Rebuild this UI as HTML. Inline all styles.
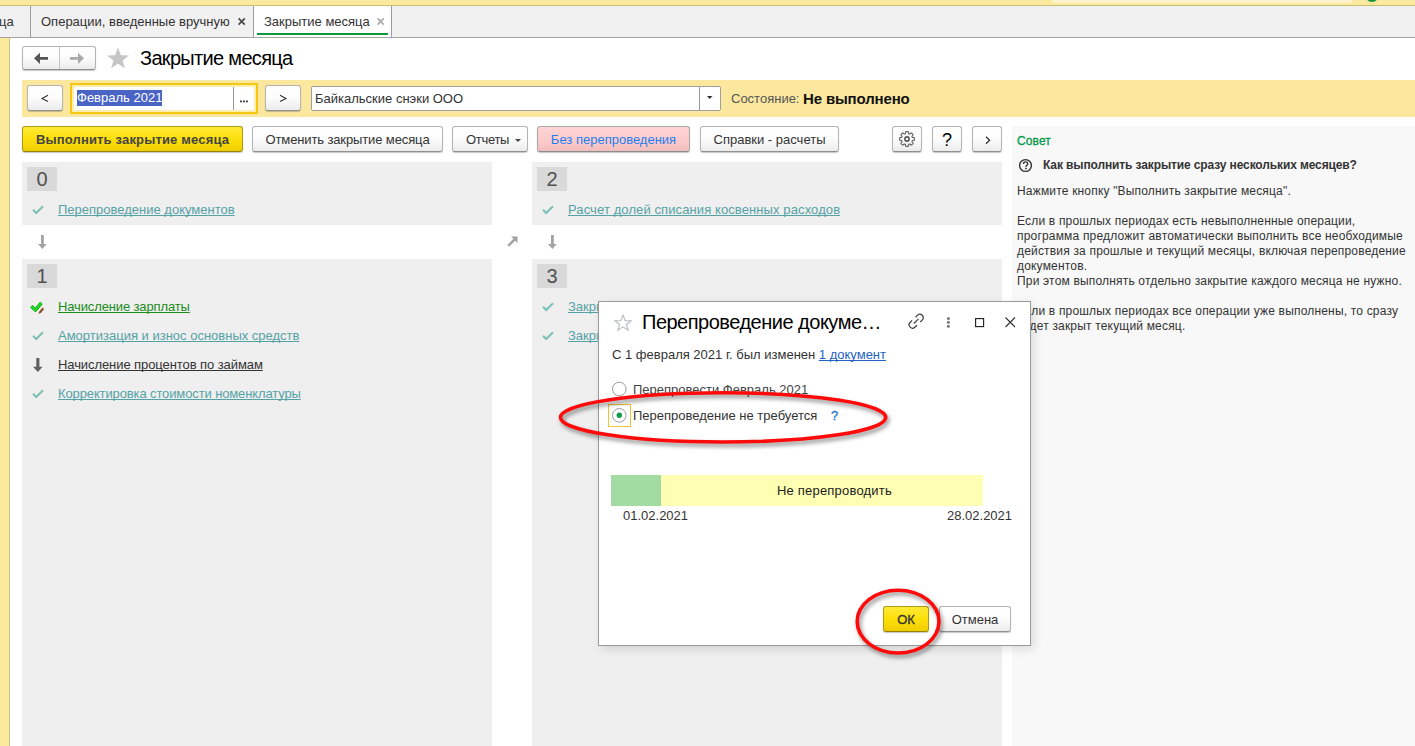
<!DOCTYPE html>
<html><head><meta charset="utf-8">
<style>
*{box-sizing:border-box;margin:0;padding:0}
html,body{width:1415px;height:746px;overflow:hidden;background:#fff;font-family:"Liberation Sans",sans-serif;font-size:13px;color:#333}
.a{position:absolute}
.t{position:absolute;white-space:nowrap;line-height:15px}
svg{position:absolute;overflow:visible}
.btn{position:absolute;border:1px solid #b4b4b4;border-bottom-color:#8f8f8f;border-radius:3px;background:linear-gradient(#ffffff 0%,#fcfcfc 50%,#ebebeb 100%);box-shadow:0 1px 1px rgba(0,0,0,.22);text-align:center;white-space:nowrap;color:#333;line-height:24px;padding-top:1px}
.ybtn{border-color:#ab9a14;border-bottom-color:#948300;background:linear-gradient(#ffe935 0%,#fde00a 50%,#f1cd00 100%);font-weight:bold;color:#444}
.panel{position:absolute;background:#efefef}
.num{position:absolute;background:#d9d9d9;width:30px;height:24px;font-size:20px;color:#505050;text-align:center;line-height:24px}
.lnk{position:absolute;white-space:nowrap;text-decoration:underline;text-decoration-skip-ink:none;color:#55a2a6;line-height:15px;text-underline-offset:1px}
</style></head><body>
<!-- top yellow -->
<div class="a" style="left:0;top:0;width:1415px;height:5px;background:#fbe9a0"></div>
<div class="a" style="left:0;top:5px;width:1415px;height:1px;background:#c9bf70"></div>
<div class="a" style="left:1052px;top:0;width:300px;height:3px;background:#fdf3cc;border-radius:0 0 3px 3px"></div>
<div class="a" style="left:1365px;top:-12px;width:14px;height:14px;border-radius:50%;background:#149640"></div>
<!-- tab bar -->
<div class="a" style="left:0;top:6px;width:1415px;height:32px;background:#f1f1f1;border-bottom:1px solid #a4a4a4"></div>
<div class="t" style="left:-1px;top:14px;color:#333">ца</div>
<div class="a" style="left:30px;top:6px;width:1px;height:31px;background:#9c9c9c"></div>
<div class="t" style="left:41px;top:14px;color:#333">Операции, введенные вручную</div>
<svg style="left:238px;top:18px" width="8" height="8"><path d="M0.6 0.4L6.8 6.6M6.8 0.4L0.6 6.6" stroke="#444" stroke-width="1.6"/></svg>
<div class="a" style="left:253px;top:6px;width:139px;height:31px;background:#fff;border-left:1px solid #9c9c9c;border-right:1px solid #9c9c9c"></div>
<div class="t" style="left:264px;top:14px;color:#333">Закрытие месяца</div>
<svg style="left:377px;top:18px" width="8" height="8"><path d="M0.6 0.4L6.8 6.6M6.8 0.4L0.6 6.6" stroke="#a8a8a8" stroke-width="1.6"/></svg>
<div class="a" style="left:257px;top:33px;width:131px;height:2px;background:#14963c"></div>
<!-- left yellow strip -->
<div class="a" style="left:0;top:38px;width:10px;height:708px;background:#fbea9a;border-right:1px solid #c9c37c"></div>

<!-- nav buttons -->
<div class="btn" style="left:22px;top:46px;width:74px;height:24px"></div>
<div class="a" style="left:59px;top:47px;width:1px;height:22px;background:#c4c4c4"></div>
<svg style="left:34px;top:52px" width="15" height="13"><path d="M0 6.3L6 0.8V5H14V7.8H6V12L0 6.3Z" fill="#555"/></svg>
<svg style="left:70px;top:52px" width="15" height="13"><path d="M14 6.3L8 0.8V5H0V7.8H8V12L14 6.3Z" fill="#aaa"/></svg>
<svg style="left:106px;top:47px" width="24" height="22"><path d="M12 0.5L14.9 8.2L23 8.4L16.6 13.4L18.9 21.3L12 16.7L5.1 21.3L7.4 13.4L1 8.4L9.1 8.2Z" fill="#c6c6c6"/></svg>
<div class="t" style="left:140px;top:47px;font-size:20px;line-height:22px;color:#000;letter-spacing:-0.68px">Закрытие месяца</div>

<!-- filter bar -->
<div class="a" style="left:22px;top:80px;width:1393px;height:37px;background:#fbe89e"></div>
<div class="btn" style="left:27px;top:85px;width:36px;height:26px"></div><svg style="left:41px;top:94px" width="8" height="9"><path d="M7 1.3L1 4.4L7 7.6" fill="none" stroke="#333" stroke-width="1.1"/></svg>
<div class="a" style="left:70px;top:83px;width:188px;height:31px;border:2px solid #f7c714;background:#fcedb0"></div>
<div class="a" style="left:74px;top:87px;width:180px;height:23px;background:#fff;border-radius:2px"></div>
<div class="a" style="left:77px;top:90px;width:85px;height:16px;background:#4a64c6"></div>
<div class="t" style="left:77px;top:90px;line-height:16px;color:#fff">Февраль 2021</div>
<div class="a" style="left:233px;top:87px;width:1px;height:23px;background:#999"></div>
<svg style="left:240px;top:100px" width="8" height="3"><rect x="0" y="0.5" width="1.8" height="1.8" fill="#333"/><rect x="3" y="0.5" width="1.8" height="1.8" fill="#333"/><rect x="6" y="0.5" width="1.8" height="1.8" fill="#333"/></svg>
<div class="btn" style="left:265px;top:85px;width:36px;height:26px"></div><svg style="left:279px;top:94px" width="8" height="9"><path d="M1 1.3L7 4.4L1 7.6" fill="none" stroke="#333" stroke-width="1.1"/></svg>
<div class="a" style="left:311px;top:86px;width:410px;height:25px;border:1px solid #9f9f9f;background:#fff;border-radius:2px"></div>
<div class="t" style="left:315px;top:91px;color:#333">Байкальские снэки ООО</div>
<div class="a" style="left:699px;top:87px;width:1px;height:23px;background:#999"></div>
<svg style="left:707px;top:96px" width="6" height="4"><path d="M0 0H5.5L2.75 3Z" fill="#333"/></svg>
<div class="t" style="left:731px;top:91px;color:#555">Состояние:</div>
<div class="t" style="left:803px;top:91px;font-size:15px;line-height:16px;font-weight:bold;color:#111;letter-spacing:-0.15px">Не выполнено</div>

<!-- toolbar -->
<div class="btn ybtn" style="left:22px;top:126px;width:221px;height:26px;letter-spacing:0.16px">Выполнить закрытие месяца</div>
<div class="btn" style="left:252px;top:126px;width:191px;height:26px;letter-spacing:-0.12px">Отменить закрытие месяца</div>
<div class="btn" style="left:452px;top:126px;width:76px;height:26px;text-align:left;padding-left:13px;letter-spacing:-0.3px">Отчеты</div>
<svg style="left:515px;top:139px" width="6" height="4"><path d="M0 0H6L3 3Z" fill="#444"/></svg>
<div class="btn" style="left:537px;top:126px;width:153px;height:26px;background:linear-gradient(#ffd4d4,#fccaca 60%,#f1bebe);border-color:#a8a8a8;border-bottom-color:#8c8c8c;color:#1f7ff0">Без перепроведения</div>
<div class="btn" style="left:700px;top:126px;width:139px;height:26px">Справки - расчеты</div>
<div class="btn" style="left:892px;top:126px;width:30px;height:26px"></div>
<svg style="left:899px;top:131px" width="16" height="16" viewBox="0 0 16 16"><path fill="none" stroke="#666" stroke-width="1.2" stroke-linejoin="round" d="M15.45 8.00 L15.45 8.23 L15.43 8.47 L15.41 8.70 L15.36 8.93 L15.27 9.15 L15.04 9.34 L14.56 9.47 L13.95 9.53 L13.53 9.61 L13.32 9.73 L13.20 9.87 L13.12 10.03 L13.06 10.19 L13.00 10.35 L12.98 10.54 L13.05 10.78 L13.29 11.13 L13.68 11.60 L13.93 12.03 L13.96 12.33 L13.87 12.55 L13.73 12.74 L13.59 12.93 L13.43 13.10 L13.27 13.27 L13.10 13.43 L12.93 13.59 L12.74 13.73 L12.55 13.87 L12.33 13.96 L12.03 13.93 L11.60 13.68 L11.13 13.29 L10.78 13.05 L10.54 12.98 L10.35 13.00 L10.19 13.06 L10.03 13.12 L9.87 13.20 L9.73 13.32 L9.61 13.53 L9.53 13.95 L9.47 14.56 L9.34 15.04 L9.15 15.27 L8.93 15.36 L8.70 15.41 L8.47 15.43 L8.23 15.45 L8.00 15.45 L7.77 15.45 L7.53 15.43 L7.30 15.41 L7.07 15.36 L6.85 15.27 L6.66 15.04 L6.53 14.56 L6.47 13.95 L6.39 13.53 L6.27 13.32 L6.13 13.20 L5.97 13.12 L5.81 13.06 L5.65 13.00 L5.46 12.98 L5.22 13.05 L4.87 13.29 L4.40 13.68 L3.97 13.93 L3.67 13.96 L3.45 13.87 L3.26 13.73 L3.07 13.59 L2.90 13.43 L2.73 13.27 L2.57 13.10 L2.41 12.93 L2.27 12.74 L2.13 12.55 L2.04 12.33 L2.07 12.03 L2.32 11.60 L2.71 11.13 L2.95 10.78 L3.02 10.54 L3.00 10.35 L2.94 10.19 L2.88 10.03 L2.80 9.87 L2.68 9.73 L2.47 9.61 L2.05 9.53 L1.44 9.47 L0.96 9.34 L0.73 9.15 L0.64 8.93 L0.59 8.70 L0.57 8.47 L0.55 8.23 L0.55 8.00 L0.55 7.77 L0.57 7.53 L0.59 7.30 L0.64 7.07 L0.73 6.85 L0.96 6.66 L1.44 6.53 L2.05 6.47 L2.47 6.39 L2.68 6.27 L2.80 6.13 L2.88 5.97 L2.94 5.81 L3.00 5.65 L3.02 5.46 L2.95 5.22 L2.71 4.87 L2.32 4.40 L2.07 3.97 L2.04 3.67 L2.13 3.45 L2.27 3.26 L2.41 3.07 L2.57 2.90 L2.73 2.73 L2.90 2.57 L3.07 2.41 L3.26 2.27 L3.45 2.13 L3.67 2.04 L3.97 2.07 L4.40 2.32 L4.87 2.71 L5.22 2.95 L5.46 3.02 L5.65 3.00 L5.81 2.94 L5.97 2.88 L6.13 2.80 L6.27 2.68 L6.39 2.47 L6.47 2.05 L6.53 1.44 L6.66 0.96 L6.85 0.73 L7.07 0.64 L7.30 0.59 L7.53 0.57 L7.77 0.55 L8.00 0.55 L8.23 0.55 L8.47 0.57 L8.70 0.59 L8.93 0.64 L9.15 0.73 L9.34 0.96 L9.47 1.44 L9.53 2.05 L9.61 2.47 L9.73 2.68 L9.87 2.80 L10.03 2.88 L10.19 2.94 L10.35 3.00 L10.54 3.02 L10.78 2.95 L11.13 2.71 L11.60 2.32 L12.03 2.07 L12.33 2.04 L12.55 2.13 L12.74 2.27 L12.93 2.41 L13.10 2.57 L13.27 2.73 L13.43 2.90 L13.59 3.07 L13.73 3.26 L13.87 3.45 L13.96 3.67 L13.93 3.97 L13.68 4.40 L13.29 4.87 L13.05 5.22 L12.98 5.46 L13.00 5.65 L13.06 5.81 L13.12 5.97 L13.20 6.13 L13.32 6.27 L13.53 6.39 L13.95 6.47 L14.56 6.53 L15.04 6.66 L15.27 6.85 L15.36 7.07 L15.41 7.30 L15.43 7.53 L15.45 7.77Z"/><circle cx="8" cy="8" r="2.1" fill="none" stroke="#555" stroke-width="1.6"/></svg>
<div class="btn" style="left:932px;top:126px;width:30px;height:26px;font-size:18px;color:#000">?</div>
<div class="btn" style="left:972px;top:126px;width:30px;height:26px"></div>
<svg style="left:985px;top:135.5px" width="6" height="9"><path d="M1 0.8L4.6 4.3L1 7.8" fill="none" stroke="#333" stroke-width="1.3"/></svg>

<!-- panels -->
<div class="panel" style="left:22px;top:162px;width:470px;height:63px"></div>
<div class="num" style="left:27px;top:167px">0</div>
<svg style="left:32px;top:205px" width="12" height="10"><path d="M1 4.8L4.2 8L11 1.2" fill="none" stroke="#7cbfb5" stroke-width="2"/></svg>
<div class="lnk" style="left:58px;top:202px">Перепроведение документов</div>
<svg style="left:38px;top:235px" width="9" height="14"><path d="M3 0H5.8V9H8.7L4.4 14L0 9H3Z" fill="#a3a3a3"/></svg>

<div class="panel" style="left:532px;top:162px;width:470px;height:63px"></div>
<div class="num" style="left:537px;top:167px">2</div>
<svg style="left:542px;top:205px" width="12" height="10"><path d="M1 4.8L4.2 8L11 1.2" fill="none" stroke="#7cbfb5" stroke-width="2"/></svg>
<div class="lnk" style="left:568px;top:202px;letter-spacing:0.1px">Расчет долей списания косвенных расходов</div>
<svg style="left:548px;top:235px" width="9" height="14"><path d="M3 0H5.8V9H8.7L4.4 14L0 9H3Z" fill="#a3a3a3"/></svg>
<svg style="left:507px;top:236px" width="11" height="11"><path d="M10.5 0.5V7L8.2 4.7L2 10.8L0.3 9L6.4 2.8L4 0.5Z" fill="#a3a3a3"/></svg>

<div class="panel" style="left:22px;top:259px;width:470px;height:487px"></div>
<div class="num" style="left:27px;top:264px">1</div>
<svg style="left:30px;top:301px" width="16" height="14"><path d="M1.4 5.2L5.4 9.1L11.4 1.8" fill="none" stroke="#139c13" stroke-width="3.4" stroke-linejoin="round"/><path d="M1.4 5.2L5.4 9.1L11.4 1.8" fill="none" stroke="#1ee01e" stroke-width="2"/><path d="M8.3 12.8L9.2 10.4L12.4 6.6L14.2 8.1L11 11.9Z" fill="#8f5535"/><path d="M12.4 6.6L14.2 8.1" stroke="#d8a080" stroke-width="1"/></svg>
<div class="lnk" style="left:58px;top:299px;color:#1a8c1a;letter-spacing:-0.13px">Начисление зарплаты</div>
<svg style="left:32px;top:331px" width="12" height="10"><path d="M1 4.8L4.2 8L11 1.2" fill="none" stroke="#7cbfb5" stroke-width="2"/></svg>
<div class="lnk" style="left:58px;top:328px">Амортизация и износ основных средств</div>
<svg style="left:33px;top:358px" width="10" height="14"><path d="M3.3 0H6.4V8.8H9.6L4.85 14L0 8.8H3.3Z" fill="#5f5f5f"/></svg>
<div class="lnk" style="left:58px;top:357px;color:#333;letter-spacing:-0.08px">Начисление процентов по займам</div>
<svg style="left:32px;top:389px" width="12" height="10"><path d="M1 4.8L4.2 8L11 1.2" fill="none" stroke="#7cbfb5" stroke-width="2"/></svg>
<div class="lnk" style="left:58px;top:386px;letter-spacing:-0.12px">Корректировка стоимости номенклатуры</div>

<div class="panel" style="left:532px;top:259px;width:470px;height:487px"></div>
<div class="num" style="left:537px;top:264px">3</div>
<svg style="left:542px;top:302px" width="12" height="10"><path d="M1 4.8L4.2 8L11 1.2" fill="none" stroke="#7cbfb5" stroke-width="2"/></svg>
<div class="lnk" style="left:568px;top:299px">Закрытие месяца</div>
<svg style="left:542px;top:331px" width="12" height="10"><path d="M1 4.8L4.2 8L11 1.2" fill="none" stroke="#7cbfb5" stroke-width="2"/></svg>
<div class="lnk" style="left:568px;top:328px">Закрытие месяца</div>

<!-- tip panel -->
<div class="a" style="left:1012px;top:126px;width:403px;height:620px;background:#f8f8f8"></div>
<div class="t" style="left:1017px;top:134px;font-size:12px;color:#04984a;-webkit-text-stroke:0.3px #04984a;letter-spacing:0.1px">Совет</div>
<svg style="left:1018px;top:158px" width="15" height="15"><circle cx="7.5" cy="7.5" r="5.9" fill="none" stroke="#333" stroke-width="1.4"/><path d="M5.5 5.9C5.5 4.6 6.4 3.9 7.6 3.9C8.8 3.9 9.7 4.6 9.7 5.8C9.7 7.2 7.9 7.3 7.9 8.9" fill="none" stroke="#333" stroke-width="1.4"/><rect x="7.1" y="9.8" width="1.6" height="1.5" fill="#333"/></svg>
<div class="t" style="left:1043px;top:158px;font-size:12px;font-weight:bold;color:#333;letter-spacing:-0.12px">Как выполнить закрытие сразу нескольких месяцев?</div>
<div class="a" style="left:1017px;top:184px;font-size:12px;line-height:15px;color:#333;width:400px;white-space:nowrap;letter-spacing:0.18px">Нажмите кнопку "Выполнить закрытие месяца".<br><br>Если в прошлых периодах есть невыполненные операции,<br>программа предложит автоматически выполнить все необходимые<br>действия за прошлые и текущий месяцы, включая перепроведение<br>документов.<br>При этом выполнять отдельно закрытие каждого месяца не нужно.<br><br>Если в прошлых периодах все операции уже выполнены, то сразу<br>будет закрыт текущий месяц.</div>

<!-- dialog -->
<div class="a" style="left:598px;top:301px;width:433px;height:345px;background:#fff;border:1px solid #9a9a9a;box-shadow:3px 3px 9px rgba(0,0,0,.12)"></div>
<svg style="left:614px;top:314px" width="18" height="17"><path d="M9 1L11.2 6.6L17.2 6.8L12.4 10.5L14.2 16.3L9 12.9L3.8 16.3L5.6 10.5L0.8 6.8L6.8 6.6Z" fill="none" stroke="#b8bcc0" stroke-width="1.1"/></svg>
<div class="t" style="left:642px;top:311px;font-size:20px;line-height:22px;color:#000;letter-spacing:-0.5px">Перепроведение докуме…</div>
<svg style="left:908px;top:313px" width="17" height="17"><g fill="none" stroke="#444" stroke-width="1.3"><path d="M7.5 4.2L9.6 2.1C10.8 0.9 12.8 0.9 14.2 2.3C15.6 3.7 15.6 5.7 14.4 6.9L12.3 9"/><path d="M8.9 12.2L6.8 14.3C5.6 15.5 3.6 15.5 2.2 14.1C0.8 12.7 0.8 10.7 2 9.5L4.1 7.4"/><path d="M5.9 10.5L10.5 5.9"/></g></svg>
<svg style="left:946px;top:316px" width="5" height="13"><circle cx="2.4" cy="2.4" r="1.5" fill="#777"/><circle cx="2.4" cy="6.3" r="1.5" fill="#777"/><circle cx="2.4" cy="10.3" r="1.5" fill="#777"/></svg>
<svg style="left:975px;top:318px" width="10" height="10"><rect x="0.6" y="0.6" width="8" height="8" fill="none" stroke="#222" stroke-width="1.15"/></svg>
<svg style="left:1005px;top:317px" width="11" height="11"><path d="M0.5 0.5L10 10M10 0.5L0.5 10" stroke="#333" stroke-width="1.1"/></svg>
<div class="t" style="left:612px;top:347px;color:#333">С 1 февраля 2021 г. был изменен <span style="color:#2362c6;text-decoration:underline;text-decoration-skip-ink:none">1 документ</span></div>
<svg style="left:611px;top:381px" width="16" height="16"><circle cx="8.3" cy="8" r="6.8" fill="#fff" stroke="#9c9c9c" stroke-width="1"/></svg>
<div class="t" style="left:633px;top:382px;color:#444">Перепровести Февраль 2021</div>
<div class="a" style="left:608px;top:404px;width:23px;height:23px;border:1px solid #f2c230"></div>
<svg style="left:611px;top:407px" width="16" height="16"><circle cx="8.3" cy="8.3" r="6.8" fill="#fff" stroke="#9c9c9c" stroke-width="1"/><circle cx="8.3" cy="8.3" r="2.7" fill="#0c9a48"/></svg>
<div class="t" style="left:633px;top:408px;color:#333">Перепроведение не требуется</div>
<div class="t" style="left:831px;top:408px;color:#1f74c4;-webkit-text-stroke:0.3px #1f74c4">?</div>
<div class="a" style="left:611px;top:475px;width:50px;height:31px;background:#a2dca2"></div>
<div class="a" style="left:661px;top:475px;width:322px;height:31px;background:#ffffb4"></div><div class="t" style="left:777px;top:483px;color:#222;letter-spacing:0.2px">Не перепроводить</div>
<div class="t" style="left:623px;top:508px;color:#333">01.02.2021</div>
<div class="t" style="left:947px;top:508px;color:#333">28.02.2021</div>
<div class="btn ybtn" style="left:883px;top:606px;width:46px;height:26px;font-weight:normal;color:#333;-webkit-text-stroke:0.35px #333">ОК</div>
<div class="btn" style="left:939px;top:606px;width:72px;height:26px">Отмена</div>

<!-- red ellipses -->
<svg style="left:0;top:0" width="1415" height="746">
<defs><filter id="sh" x="-20%" y="-50%" width="140%" height="200%"><feGaussianBlur stdDeviation="2"/></filter></defs>
<ellipse cx="725" cy="420.4" rx="162.6" ry="24.6" fill="none" stroke="rgba(0,0,0,.45)" stroke-width="3.6" filter="url(#sh)"/>
<ellipse cx="723.1" cy="417.4" rx="162.6" ry="24.6" fill="none" stroke="#ff0a0a" stroke-width="3.6"/>
<ellipse cx="900" cy="624.6" rx="40.9" ry="31.4" fill="none" stroke="rgba(0,0,0,.45)" stroke-width="3.6" filter="url(#sh)"/>
<ellipse cx="898.1" cy="621.6" rx="40.9" ry="31.4" fill="none" stroke="#ff0a0a" stroke-width="3.6"/>
</svg>
</body></html>
